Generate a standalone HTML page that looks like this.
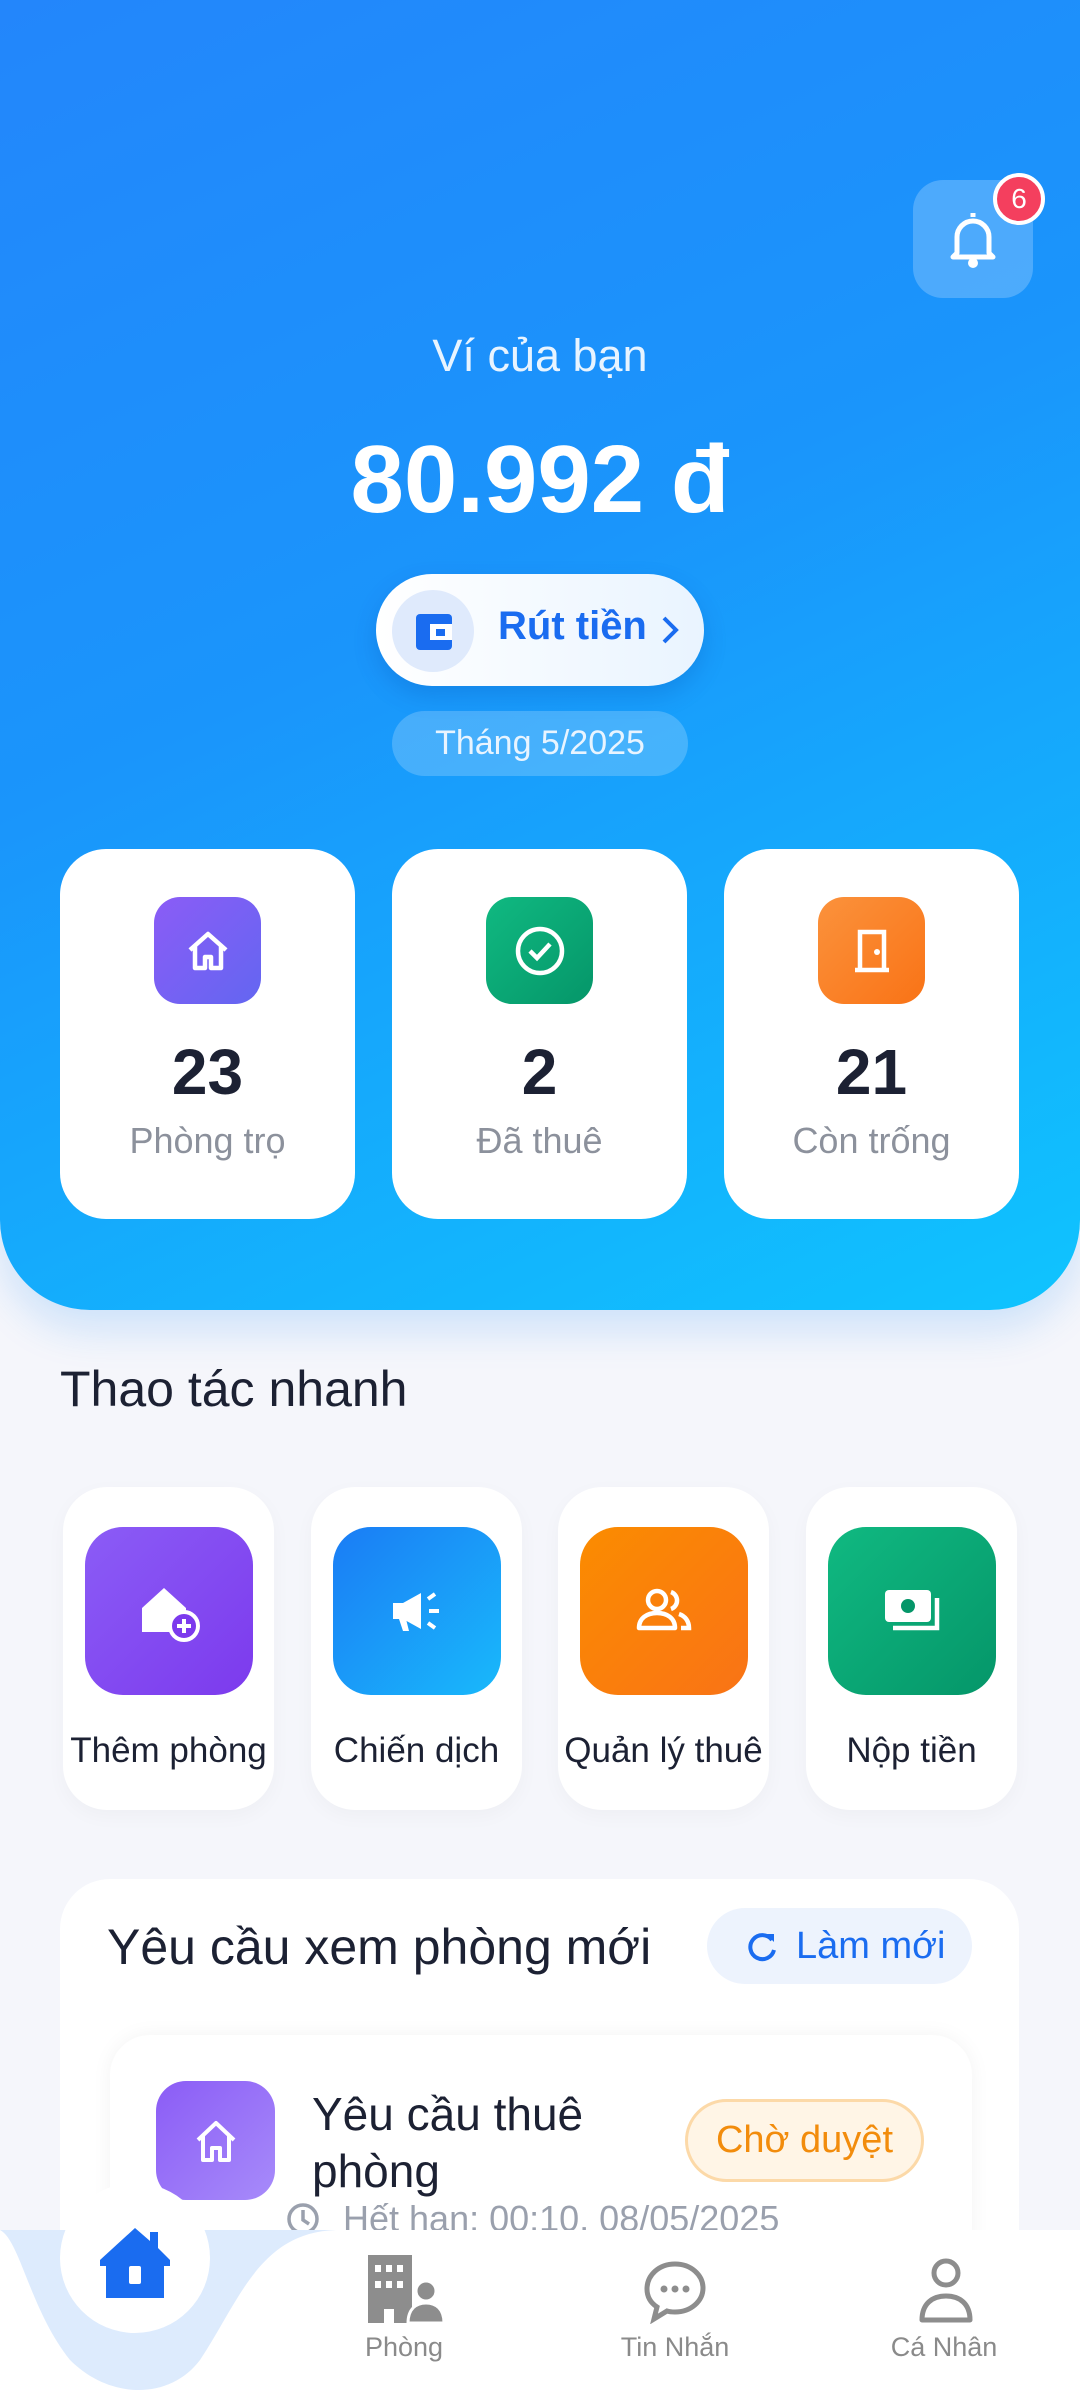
<!DOCTYPE html>
<html style="width:1080px;height:2400px;overflow:hidden"><head><meta charset="utf-8"><style>
*{margin:0;padding:0;box-sizing:border-box}
body{width:1080px;height:2400px;overflow:hidden;background:#f5f6fb;font-family:"Liberation Sans",sans-serif;position:relative}
.abs{position:absolute}
.hdr{left:0;top:0;width:1080px;height:1310px;border-radius:0 0 90px 90px;background:linear-gradient(155deg,#2386fb 0%,#1a95fb 45%,#0fc4fe 100%);box-shadow:0 20px 40px rgba(30,140,250,.18)}
.c{text-align:center;width:1080px;left:0}
.stat{background:#fff;border-radius:46px;width:295px;height:370px;top:849px;text-align:center}
.stat .ic{width:107px;height:107px;border-radius:26px;margin:48px auto 0;display:flex;align-items:center;justify-content:center}
.stat .n{font-size:64px;font-weight:bold;color:#1c2133;margin-top:32px;line-height:72px}
.stat .l{font-size:36px;color:#8c919c;margin-top:12px}
.qa{background:#fff;border-radius:44px;width:211px;height:323px;top:1487px;text-align:center;box-shadow:0 6px 20px rgba(0,0,0,.03)}
.qa .ic{width:168px;height:168px;border-radius:38px;margin:40px auto 0;display:flex;align-items:center;justify-content:center}
.qa .l{font-size:35px;color:#1c2133;margin-top:36px;white-space:nowrap;margin-left:-10px;margin-right:-10px}
.nav{font-size:27px;color:#8a8a8a;text-align:center;width:200px}
</style></head><body>
<div class="abs hdr"></div>
<div class="abs" style="left:913px;top:180px;width:120px;height:118px;border-radius:30px;background:rgba(255,255,255,.22)"></div>
<svg class="abs" style="left:943px;top:207px" width="60" height="66" viewBox="0 0 60 66"><path d="M30 6v4M14 46V30a16 16 0 0 1 32 0v16l4 4H10z" fill="none" stroke="#fff" stroke-width="5" stroke-linejoin="round"/><circle cx="30" cy="56" r="5" fill="#fff"/></svg>
<div class="abs" style="left:993px;top:173px;width:52px;height:52px;border-radius:50%;background:#f43f5e;border:4px solid #fff;color:#fff;font-size:28px;text-align:center;line-height:44px">6</div>
<div class="abs c" style="top:330px;font-size:45px;color:#e8f4ff">Ví của bạn</div>
<div class="abs c" style="top:425px;font-size:96px;font-weight:bold;color:#fff">80.992 đ</div>
<div class="abs" style="left:376px;top:574px;width:328px;height:112px;border-radius:56px;background:linear-gradient(90deg,#fff,#e9f4ff);box-shadow:0 10px 24px rgba(0,60,160,.2)"></div>
<div class="abs" style="left:392px;top:590px;width:82px;height:82px;border-radius:50%;background:#dfeafc"></div>
<svg class="abs" style="left:414px;top:612px" width="40" height="40" viewBox="0 0 40 40"><rect x="2" y="2" width="36" height="36" rx="4" fill="#1a6cf0"/><rect x="16" y="12" width="22" height="16" fill="#fff"/><rect x="22" y="17" width="9" height="7" fill="#1a6cf0"/></svg>
<div class="abs" style="left:498px;top:604px;font-size:40px;font-weight:bold;color:#1a6cf0">Rút tiền</div>
<svg class="abs" style="left:660px;top:614px" width="20" height="32" viewBox="0 0 20 32"><path d="M4 4l12 12L4 28" fill="none" stroke="#1a6cf0" stroke-width="4"/></svg>
<div class="abs" style="left:392px;top:711px;width:296px;height:65px;border-radius:33px;background:rgba(255,255,255,.2);color:#e8f4ff;font-size:34px;text-align:center;line-height:65px">Tháng 5/2025</div>

<div class="abs stat" style="left:60px"><div class="ic" style="background:linear-gradient(135deg,#8b5cf6,#6366f1)"><svg width="50" height="50" viewBox="0 0 50 50"><path d="M7 24L25 8l18 16M12 20v22h10V31h6v11h10V20" fill="none" stroke="#fff" stroke-width="4.5" stroke-linejoin="round"/></svg></div><div class="n">23</div><div class="l">Phòng trọ</div></div>
<div class="abs stat" style="left:392px"><div class="ic" style="background:linear-gradient(135deg,#10b981,#059669)"><svg width="54" height="54" viewBox="0 0 54 54"><circle cx="27" cy="27" r="22" fill="none" stroke="#fff" stroke-width="4.5"/><path d="M17 27l7 7 13-14" fill="none" stroke="#fff" stroke-width="4.5"/></svg></div><div class="n">2</div><div class="l">Đã thuê</div></div>
<div class="abs stat" style="left:724px"><div class="ic" style="background:linear-gradient(135deg,#fb923c,#f97316)"><svg width="50" height="50" viewBox="0 0 50 50"><path d="M8 44h34M13 44V6h24v38" fill="none" stroke="#fff" stroke-width="4.5"/><circle cx="30" cy="26" r="3" fill="#fff"/></svg></div><div class="n">21</div><div class="l">Còn trống</div></div>

<div class="abs" style="left:60px;top:1360px;font-size:50px;color:#1c2133">Thao tác nhanh</div>
<div class="abs qa" style="left:63px"><div class="ic" style="background:linear-gradient(135deg,#8b5cf6,#7c3aed)"><svg width="70" height="70" viewBox="0 0 70 70"><path d="M8 32L30 12l22 20v24H8z" fill="#fff"/><circle cx="50" cy="50" r="14" fill="#7c3aed" stroke="#fff" stroke-width="4"/><path d="M50 43v14M43 50h14" stroke="#fff" stroke-width="4"/></svg></div><div class="l">Thêm phòng</div></div>
<div class="abs qa" style="left:311px"><div class="ic" style="background:linear-gradient(135deg,#1a7cf5,#19b9fb)"><svg width="64" height="64" viewBox="0 0 64 64"><path d="M8 24h10l18-10v36L18 40H8z" fill="#fff"/><path d="M14 40l4 12h6l-3-12" fill="#fff"/><path d="M44 32h10M43 20l7-5M43 44l7 5" stroke="#fff" stroke-width="4"/></svg></div><div class="l">Chiến dịch</div></div>
<div class="abs qa" style="left:558px"><div class="ic" style="background:linear-gradient(135deg,#fb8c00,#f97316)"><svg width="70" height="70" viewBox="0 0 70 70"><circle cx="28" cy="24" r="9" fill="none" stroke="#fff" stroke-width="4.5"/><path d="M10 52c0-10 8-15 18-15s18 5 18 15z" fill="none" stroke="#fff" stroke-width="4.5" stroke-linejoin="round"/><path d="M42 16a9 9 0 0 1 0 17M50 38c6 2 10 7 10 14h-8" fill="none" stroke="#fff" stroke-width="4.5"/></svg></div><div class="l">Quản lý thuê</div></div>
<div class="abs qa" style="left:806px"><div class="ic" style="background:linear-gradient(135deg,#10b981,#059669)"><svg width="70" height="70" viewBox="0 0 70 70"><rect x="8" y="14" width="46" height="32" rx="4" fill="#fff"/><circle cx="31" cy="30" r="7" fill="#059669"/><path d="M60 22v30H16" fill="none" stroke="#fff" stroke-width="4.5"/></svg></div><div class="l">Nộp tiền</div></div>

<div class="abs" style="left:60px;top:1879px;width:959px;height:480px;border-radius:50px;background:#fff"></div>
<div class="abs" style="left:107px;top:1918px;font-size:50px;color:#1c2133">Yêu cầu xem phòng mới</div>
<div class="abs" style="left:707px;top:1908px;width:265px;height:76px;border-radius:38px;background:#edf3fd"></div>
<svg class="abs" style="left:744px;top:1928px" width="36" height="36" viewBox="0 0 36 36"><path d="M28 12A12 12 0 1 0 30 22" fill="none" stroke="#1a6cf0" stroke-width="4"/><path d="M22 6h8v8z" fill="#1a6cf0"/></svg>
<div class="abs" style="left:796px;top:1925px;font-size:38px;color:#1a6cf0">Làm mới</div>
<div class="abs" style="left:110px;top:2035px;width:862px;height:300px;border-radius:40px;background:#fff;box-shadow:0 0 20px rgba(0,0,0,.05)"></div>
<div class="abs" style="left:156px;top:2081px;width:119px;height:119px;border-radius:30px;background:linear-gradient(135deg,#8b5cf6,#a78bfa);display:flex;align-items:center;justify-content:center"><svg width="46" height="46" viewBox="0 0 46 46"><path d="M5 22L23 5l18 17M10 18v24h9V30h8v12h9V18" fill="none" stroke="#fff" stroke-width="4" stroke-linejoin="round"/></svg></div>
<div class="abs" style="left:312px;top:2086px;font-size:46px;line-height:57px;color:#1c2133">Yêu cầu thuê<br>phòng</div>
<div class="abs" style="left:685px;top:2099px;width:239px;height:83px;border-radius:42px;background:#fff5e6;border:3px solid #fcd9a8;color:#f28c0c;font-size:38px;text-align:center;line-height:77px">Chờ duyệt</div>
<svg class="abs" style="left:285px;top:2201px" width="36" height="36" viewBox="0 0 36 36"><circle cx="18" cy="18" r="14" fill="none" stroke="#9aa0ad" stroke-width="3.5"/><path d="M18 9v10l6 4" fill="none" stroke="#9aa0ad" stroke-width="3.5"/></svg>
<div class="abs" style="left:343px;top:2198px;font-size:36px;color:#9aa0ad">Hết hạn: 00:10, 08/05/2025</div>

<svg class="abs" style="left:0;top:2180px" width="1080" height="220" viewBox="0 0 1080 220"><rect x="0" y="50" width="1080" height="170" fill="#fff"/><path d="M0 50C20 60 30 130 70 180c40 40 100 40 130 0c40-60 60-130 140-130z" fill="#ddebfd"/></svg>
<div class="abs" style="left:60px;top:2183px;width:150px;height:150px;border-radius:50%;background:#fff"></div>
<svg class="abs" style="left:92px;top:2220px" width="86" height="86" viewBox="0 0 86 86"><path d="M43 8L8 40v6h6v32h58V46h6v-6L66 28V12h-8v9z" fill="#1a6cf0"/><rect x="37" y="46" width="12" height="18" rx="2" fill="#fff"/></svg>
<svg class="abs" style="left:366px;top:2255px" width="78" height="68" viewBox="0 0 78 68"><path d="M2 0h44v68H28V54H18v14H2z" fill="#8d8d8d"/><g fill="#fff"><rect x="9" y="10" width="6" height="7"/><rect x="20" y="10" width="6" height="7"/><rect x="31" y="10" width="6" height="7"/><rect x="9" y="26" width="6" height="7"/><rect x="20" y="26" width="6" height="7"/><rect x="31" y="26" width="6" height="7"/></g><circle cx="60" cy="36" r="10" fill="#8d8d8d" stroke="#fff" stroke-width="3"/><path d="M42 68c0-14 8-20 18-20s18 6 18 20z" fill="#8d8d8d" stroke="#fff" stroke-width="3"/></svg>
<svg class="abs" style="left:643px;top:2260px" width="64" height="64" viewBox="0 0 64 64"><path d="M32 4C16 4 4 15 4 29c0 8 4 14 10 18l-3 12 13-8c3 1 5 1 8 1 16 0 28-11 28-24S48 4 32 4z" fill="none" stroke="#8d8d8d" stroke-width="5"/><circle cx="21" cy="29" r="3.5" fill="#8d8d8d"/><circle cx="32" cy="29" r="3.5" fill="#8d8d8d"/><circle cx="43" cy="29" r="3.5" fill="#8d8d8d"/></svg>
<svg class="abs" style="left:918px;top:2256px" width="56" height="68" viewBox="0 0 56 68"><circle cx="28" cy="17" r="12" fill="none" stroke="#8d8d8d" stroke-width="5"/><path d="M4 64c0-16 10-24 24-24s24 8 24 24z" fill="none" stroke="#8d8d8d" stroke-width="5" stroke-linejoin="round"/></svg>
<div class="abs nav" style="left:304px;top:2332px">Phòng</div>
<div class="abs nav" style="left:575px;top:2332px">Tin Nhắn</div>
<div class="abs nav" style="left:844px;top:2332px">Cá Nhân</div>
</body></html>
